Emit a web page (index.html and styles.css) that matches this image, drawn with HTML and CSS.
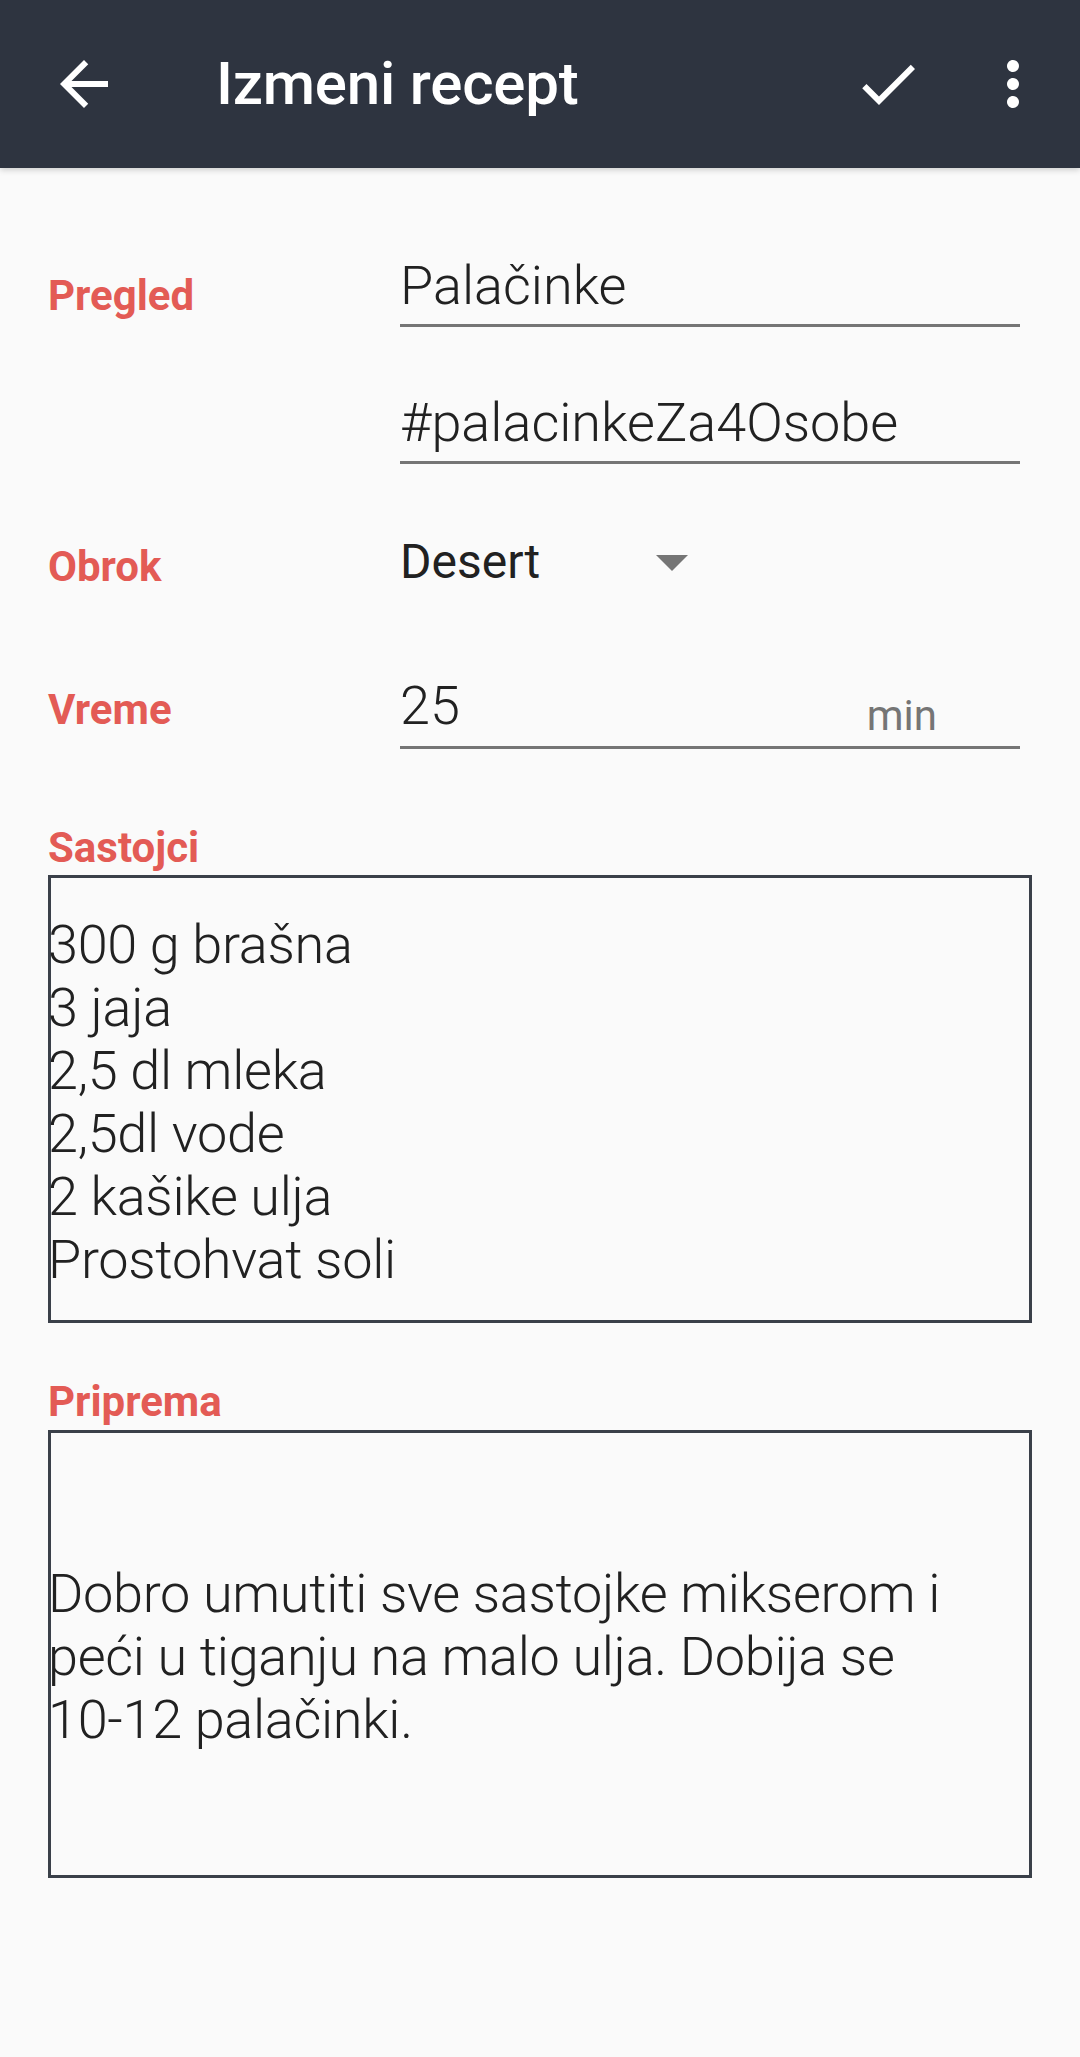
FILE: index.html
```html
<!DOCTYPE html>
<html lang="sr">
<head>
<meta charset="utf-8">
<title>Izmeni recept</title>
<link rel="stylesheet" href="styles.css">
</head>
<body>
<header class="toolbar">
  <div class="icon-btn back">
    <svg viewBox="0 0 24 24" width="72" height="72"><path fill="#fff" d="M20 11H7.83l5.59-5.59L12 4l-8 8 8 8 1.41-1.41L7.83 13H20v-2z"/></svg>
  </div>
  <h1 class="title">Izmeni recept</h1>
  <div class="spacer"></div>
  <div class="icon-btn check">
    <svg viewBox="0 0 24 24" width="72" height="72"><path fill="#fff" d="M9 16.17L4.83 12l-1.42 1.41L9 19 21 7l-1.41-1.41z"/></svg>
  </div>
  <div class="icon-btn more">
    <svg viewBox="0 0 24 24" width="72" height="72"><path fill="#fff" d="M12 8c1.1 0 2-.9 2-2s-.9-2-2-2-2 .9-2 2 .9 2 2 2zm0 2c-1.1 0-2 .9-2 2s.9 2 2 2 2-.9 2-2-.9-2-2-2zm0 6c-1.1 0-2 .9-2 2s.9 2 2 2 2-.9 2-2-.9-2-2-2z"/></svg>
  </div>
</header>

<main class="content">
  <div class="row row-name">
    <div class="label label-name">Pregled</div>
    <div class="field">Palačinke</div>
  </div>
  <div class="row row-tag">
    <div class="label"></div>
    <div class="field">#palacinkeZa4Osobe</div>
  </div>
  <div class="row row-meal">
    <div class="label label-meal">Obrok</div>
    <div class="spinner">
      <span class="spinner-text">Desert</span>
      <span class="spinner-arrow"></span>
    </div>
  </div>
  <div class="row row-time">
    <div class="label label-time">Vreme</div>
    <div class="field field-time">
      <span class="time-value">25</span>
      <span class="suffix">min</span>
    </div>
  </div>

  <div class="section section-ingredients">
    <div class="label">Sastojci</div>
    <div class="textbox">
      <div class="textbox-text">300 g brašna<br>3 jaja<br>2,5 dl mleka<br>2,5dl vode<br>2 kašike ulja<br>Prostohvat soli</div>
    </div>
  </div>

  <div class="section section-prep">
    <div class="label">Priprema</div>
    <div class="textbox">
      <div class="textbox-text">Dobro umutiti sve sastojke mikserom i peći u tiganju na malo ulja. Dobija se <span class="nowrap">10-12</span> palačinki.</div>
    </div>
  </div>
</main>
</body>
</html>
```

FILE: styles.css
```css
* { box-sizing: border-box; }

html, body {
  margin: 0;
  padding: 0;
  background: #fafafa;
  font-family: Roboto, "Noto Sans", "Liberation Sans", sans-serif;
}

body {
  width: 1080px;
  min-height: 2057px;
}

.toolbar {
  height: 168px;
  background: #2e3440;
  display: flex;
  align-items: center;
  box-shadow: 0 2px 6px rgba(0,0,0,0.18);
}

.icon-btn {
  width: 72px;
  height: 72px;
  flex: none;
}
.icon-btn svg { display: block; }

.back { margin-left: 48px; }

.title {
  margin: 0 0 0 96px;
  color: #fff;
  font-size: 60px;
  font-weight: 500;
  line-height: 70px;
  white-space: nowrap;
  letter-spacing: -0.2px;
}

.spacer { flex: 1; }

.check { margin-right: 53px; }
.more { margin-right: 31px; }

.content {
  padding: 0 48px;
}

.row {
  display: flex;
  align-items: flex-start;
}

.label {
  width: 352px;
  flex: none;
  color: #e35b55;
  font-size: 42px;
  font-weight: 700;
  line-height: 49px;
}

.field {
  width: 620px;
  font-size: 54px;
  font-weight: 300;
  color: #212121;
  line-height: 63px;
  padding-bottom: 7px;
  border-bottom: 3px solid #757575;
}

.row-name { margin-top: 86px; }
.label-name { margin-top: 17px; }

.row-tag { margin-top: 64px; }

.row-meal { margin-top: 70px; }
.label-meal { margin-top: 8px; }

.spinner {
  display: flex;
  align-items: center;
  width: 300px;
}
.spinner-text {
  font-size: 48px;
  font-weight: 400;
  color: #212121;
  line-height: 56px;
  width: 256px;
}
.spinner-arrow {
  width: 0;
  height: 0;
  border-left: 16px solid transparent;
  border-right: 16px solid transparent;
  border-top: 16px solid #757575;
  margin-top: 2px;
}

.row-time { margin-top: 83px; }
.label-time { margin-top: 11px; }

.field-time {
  display: flex;
  align-items: flex-start;
  padding-bottom: 6px;
}
.time-value { flex: 1; }
.suffix {
  font-size: 42px;
  font-weight: 400;
  color: #757575;
  line-height: 49px;
  margin-top: 17px;
  padding-right: 83px;
}

.section-ingredients { margin-top: 74px; }
.section-prep { margin-top: 54px; }

.section .label { width: auto; }

.textbox {
  margin-top: 3px;
  width: 984px;
  height: 448px;
  border: 3px solid #3a4049;
  padding-top: 5px;
  display: flex;
  flex-direction: column;
  justify-content: center;
}
.section-prep .textbox { margin-top: 4px; }

.textbox-text {
  margin-left: -3px;
  font-size: 54px;
  font-weight: 300;
  color: #212121;
  line-height: 63px;
  letter-spacing: -0.3px;
}

.nowrap { white-space: nowrap; }
```
